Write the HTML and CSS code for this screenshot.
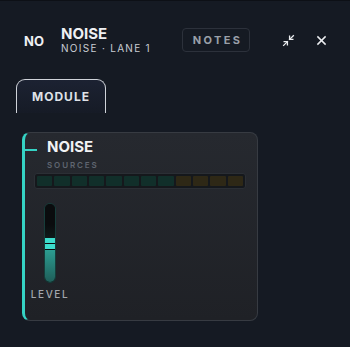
FILE: index.html
```html
<!DOCTYPE html>
<html lang="en">
<head>
  <meta charset="UTF-8" />
  <meta name="viewport" content="width=device-width, initial-scale=1.0"/>
  <title>Noise</title>
  <link rel="stylesheet" href="styles.css">
</head>
<body>
  <div class="panel">
    <div class="header">
      <div class="badge">NO</div>
      <div class="titles">
        <div class="title">NOISE</div>
        <div class="subtitle">NOISE · LANE 1</div>
      </div>
      <button class="notes">NOTES</button>
      <button class="icon-btn compress" title="Collapse">
        <svg width="13" height="13" viewBox="0 0 24 24" fill="none" stroke="currentColor" stroke-width="2.4" stroke-linecap="square">
          <polyline points="4 14 10 14 10 20"/>
          <polyline points="20 10 14 10 14 4"/>
          <line x1="14" y1="10" x2="21" y2="3"/>
          <line x1="3" y1="21" x2="10" y2="14"/>
        </svg>
      </button>
      <button class="icon-btn close" title="Close">
        <svg width="11" height="11" viewBox="0 0 12 12" fill="none" stroke="currentColor" stroke-width="1.6">
          <line x1="1.5" y1="1.5" x2="10.5" y2="10.5"/>
          <line x1="10.5" y1="1.5" x2="1.5" y2="10.5"/>
        </svg>
      </button>
    </div>

    <div class="tabs">
      <div class="tab active">MODULE</div>
    </div>

    <div class="card">
      <span class="tick"></span>
      <div class="card-head">
        <div class="card-title">NOISE</div>
        <div class="card-label">SOURCES</div>
      </div>
      <div class="meter">
        <span class="seg on"></span>
        <span class="seg on"></span>
        <span class="seg on"></span>
        <span class="seg on"></span>
        <span class="seg on"></span>
        <span class="seg on"></span>
        <span class="seg on"></span>
        <span class="seg on"></span>
        <span class="seg warn"></span>
        <span class="seg warn"></span>
        <span class="seg warn"></span>
        <span class="seg warn"></span>
      </div>
      <div class="fader">
        <div class="track">
          <div class="empty"></div>
          <div class="thumb"></div>
          <div class="thumb"></div>
          <div class="fill"></div>
        </div>
        <div class="fader-label">LEVEL</div>
      </div>
    </div>
  </div>
</body>
</html>
```

FILE: styles.css
```css
body {
  margin: 0;
  background: #151a23;
  font-family: 'Inter', 'Noto Sans', sans-serif;
  color: #eef0f3;
  height: 347px;
  overflow: hidden;
}

.panel {
  border-top: 1px solid #0d1016;
}

.header {
  display: flex;
  align-items: center;
  height: 78px;
  padding-left: 24px;
}

.badge {
  font-size: 13px;
  font-weight: 700;
  width: 37px;
  padding-top: 2px;
}

.titles {
  display: flex;
  flex-direction: column;
  width: 121px;
}

.title {
  font-size: 15px;
  font-weight: 700;
  line-height: 16px;
}

.subtitle {
  font-size: 10px;
  letter-spacing: 1.3px;
  color: #c9cdd3;
  line-height: 12px;
}

.notes {
  background: transparent;
  border: 1px solid #2c313b;
  border-radius: 4px;
  color: #9aa0a9;
  font-family: inherit;
  font-size: 11px;
  font-weight: 700;
  letter-spacing: 2.4px;
  width: 68px;
  height: 24px;
  padding: 0 0 0 3px;
}

button {
  cursor: pointer;
}

.icon-btn {
  background: transparent;
  border: none;
  color: #eceef1;
  padding: 0;
  display: flex;
  align-items: center;
  justify-content: center;
}

.compress {
  margin-left: 31px;
  width: 14px;
  height: 14px;
}

.close {
  margin-left: 20px;
  width: 12px;
  height: 14px;
}

.tabs {
  display: flex;
  padding-left: 16px;
}

.tab {
  width: 88px;
  height: 33px;
  border: 1px solid #cfd3d9;
  border-bottom: none;
  border-radius: 9px 9px 0 0;
  background: linear-gradient(#1c2232, #161b26);
  font-size: 12px;
  font-weight: 700;
  letter-spacing: 1px;
  color: #dfe2e7;
  text-align: center;
  line-height: 33px;
}

.card {
  position: relative;
  margin: 19px 0 0 22px;
  width: 223px;
  height: 187px;
  border: 1px solid #373b42;
  border-left: 3px solid #35d3c4;
  border-radius: 8px;
  background: linear-gradient(#26292f, #1f2126);
  padding-left: 9px;
  box-sizing: content-box;
}

.tick {
  position: absolute;
  left: 0;
  top: 16px;
  width: 12px;
  height: 2px;
  background: #35d3c4;
}

.card-head {
  padding: 5px 0 0 13px;
}

.card-title {
  font-size: 15px;
  font-weight: 700;
  line-height: 18px;
  color: #f1f2f4;
}

.card-label {
  margin-top: 4px;
  font-size: 8px;
  font-weight: 600;
  letter-spacing: 1.9px;
  color: #5f6570;
  line-height: 10px;
}

.meter {
  display: flex;
  gap: 2px;
  margin-top: 3px;
  width: 212px;
  height: 16px;
  padding: 2px;
  box-sizing: border-box;
  background: #15181c;
  border: 1px solid #2b2f35;
  border-radius: 3px;
}

.seg {
  flex: 1;
  border-radius: 1px;
}

.seg.on { background: #112f2a; }
.seg.warn { background: #2e2816; }

.fader {
  display: flex;
  flex-direction: column;
  align-items: center;
  width: 32px;
  margin-top: 14px;
}

.track {
  display: flex;
  flex-direction: column;
  width: 12px;
  height: 80px;
  border: 1px solid #163d3a;
  border-radius: 6px;
  box-sizing: border-box;
  overflow: hidden;
  background: #0a0c0e;
}

.empty {
  height: 34px;
  background: linear-gradient(#0a0c0e 60%, #0f1a1a);
}

.thumb {
  height: 5px;
  background: #3cdccc;
  margin-bottom: 1px;
}

.fill {
  flex: 1;
  background: linear-gradient(#2c9d91, #1f5e59);
}

.fader-label {
  margin-top: 5px;
  font-size: 10px;
  font-weight: 500;
  letter-spacing: 1.6px;
  color: #a3a7ae;
}
```
